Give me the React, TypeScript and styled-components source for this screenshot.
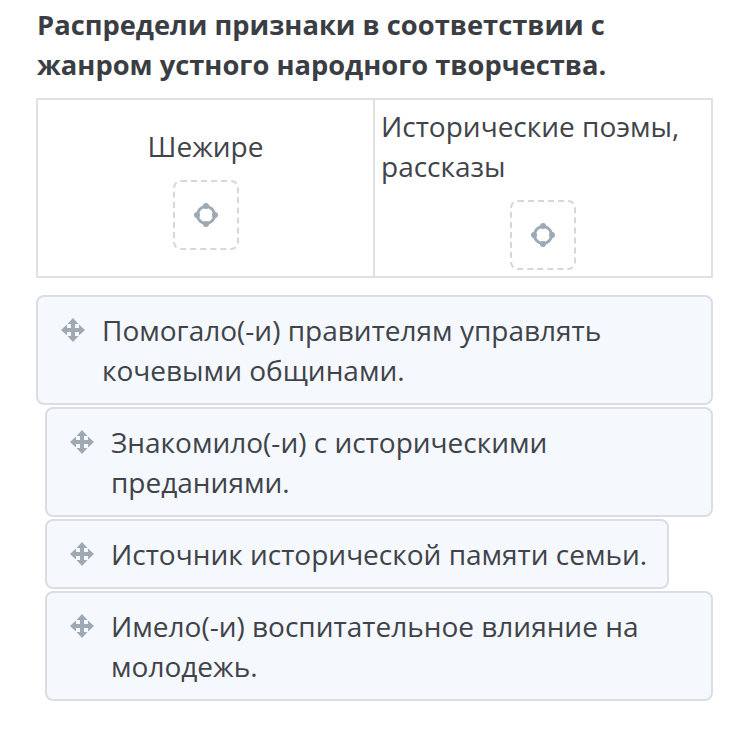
import React from "react";
import styled, { createGlobalStyle } from "styled-components";

const Global = createGlobalStyle`
  html, body { margin: 0; padding: 0; background: #ffffff; }
  body { font-family: "Open Sans", "Noto Sans", sans-serif; color: #3d4147; }
`;

const Page = styled.div`
  width: 750px;
  padding: 5px 37px 0 36px;
  box-sizing: border-box;
`;

const Title = styled.h1`
  margin: 0 0 13px 1px;
  font-size: 27.3px;
  line-height: 40px;
  font-weight: 700;
  color: #3a3e44;
`;

const Table = styled.div`
  display: grid;
  grid-template-columns: 337px 1fr;
  height: 180px;
  border: 2px solid #dfe1e3;
  box-sizing: border-box;
`;

const Cell = styled.div<{ $align: "center" | "left"; $divider?: boolean }>`
  display: flex;
  flex-direction: column;
  justify-content: center;
  align-items: ${(p) => (p.$align === "center" ? "center" : "stretch")};
  padding: 6px 6px;
  border-right: ${(p) => (p.$divider ? "2px solid #dfe1e3" : "none")};
  gap: 14px;
`;

const CellText = styled.div<{ $align: "center" | "left" }>`
  font-size: 28px;
  line-height: 40px;
  color: #40444a;
  text-align: ${(p) => p.$align};
`;

const Drop = styled.div`
  width: 66px;
  height: 70px;
  box-sizing: border-box;
  border: 2px dashed #d4d7db;
  border-radius: 8px;
  display: flex;
  align-items: center;
  justify-content: center;
  align-self: center;
`;

const List = styled.div`
  display: flex;
  flex-direction: column;
  align-items: flex-start;
  gap: 2px;
  margin-top: 17px;
`;

const Card = styled.div<{ $indent: number; $full: boolean }>`
  display: flex;
  align-items: flex-start;
  gap: 16px;
  margin-left: ${(p) => p.$indent}px;
  width: ${(p) => (p.$full ? `calc(100% - ${p.$indent}px)` : "auto")};
  box-sizing: border-box;
  padding: 13px 20px 13px 22px;
  background: #f5f8fc;
  border: 2px solid #dadee2;
  border-radius: 8px;
`;

const Grip = styled.div`
  flex: none;
  width: 26px;
  height: 40px;
  display: flex;
  align-items: center;
  justify-content: center;
`;

const Icon = styled.svg<{ $size: number }>`
  display: block;
  flex: none;
  width: ${(p) => p.$size}px;
  height: ${(p) => p.$size}px;
`;

const CardText = styled.div`
  font-size: 28px;
  line-height: 40px;
  color: #3f434a;
`;

const ICON = "#9ea9b4";

const MoveIcon = () => (
  <Icon $size={26} viewBox="0 0 26 26">
    <rect x="11" y="5" width="4" height="16" fill={ICON} />
    <rect x="5" y="11" width="16" height="4" fill={ICON} />
    <polygon points="13,1 7.5,7 18.5,7" fill={ICON} />
    <polygon points="13,25 7.5,19 18.5,19" fill={ICON} />
    <polygon points="1,13 7,7.5 7,18.5" fill={ICON} />
    <polygon points="25,13 19,7.5 19,18.5" fill={ICON} />
  </Icon>
);

const TargetIcon = () => (
  <Icon $size={26} viewBox="0 0 26 26">
    <circle cx="13" cy="13" r="8.5" fill="none" stroke={ICON} strokeWidth="3" />
    <circle cx="13" cy="4" r="3" fill={ICON} />
    <circle cx="13" cy="22" r="3" fill={ICON} />
    <circle cx="4" cy="13" r="3" fill={ICON} />
    <circle cx="22" cy="13" r="3" fill={ICON} />
  </Icon>
);

const items = [
  { text: "Помогало(-и) правителям управлять кочевыми общинами.", indent: 0, full: true },
  { text: "Знакомило(-и) с историческими преданиями.", indent: 9, full: true },
  { text: "Источник исторической памяти семьи.", indent: 9, full: false },
  { text: "Имело(-и) воспитательное влияние на молодежь.", indent: 9, full: true },
];

export default function App() {
  return (
    <>
      <Global />
      <Page>
        <Title>
          Распредели признаки в соответствии с
          <br />
          жанром устного народного творчества.
        </Title>
        <Table>
          <Cell $align="center" $divider>
            <CellText $align="center">Шежире</CellText>
            <Drop>
              <TargetIcon />
            </Drop>
          </Cell>
          <Cell $align="left">
            <CellText $align="left">
              Исторические поэмы,
              <br />
              рассказы
            </CellText>
            <Drop>
              <TargetIcon />
            </Drop>
          </Cell>
        </Table>
        <List>
          {items.map((it) => (
            <Card key={it.text} $indent={it.indent} $full={it.full}>
              <Grip>
                <MoveIcon />
              </Grip>
              <CardText>{it.text}</CardText>
            </Card>
          ))}
        </List>
      </Page>
    </>
  );
}
